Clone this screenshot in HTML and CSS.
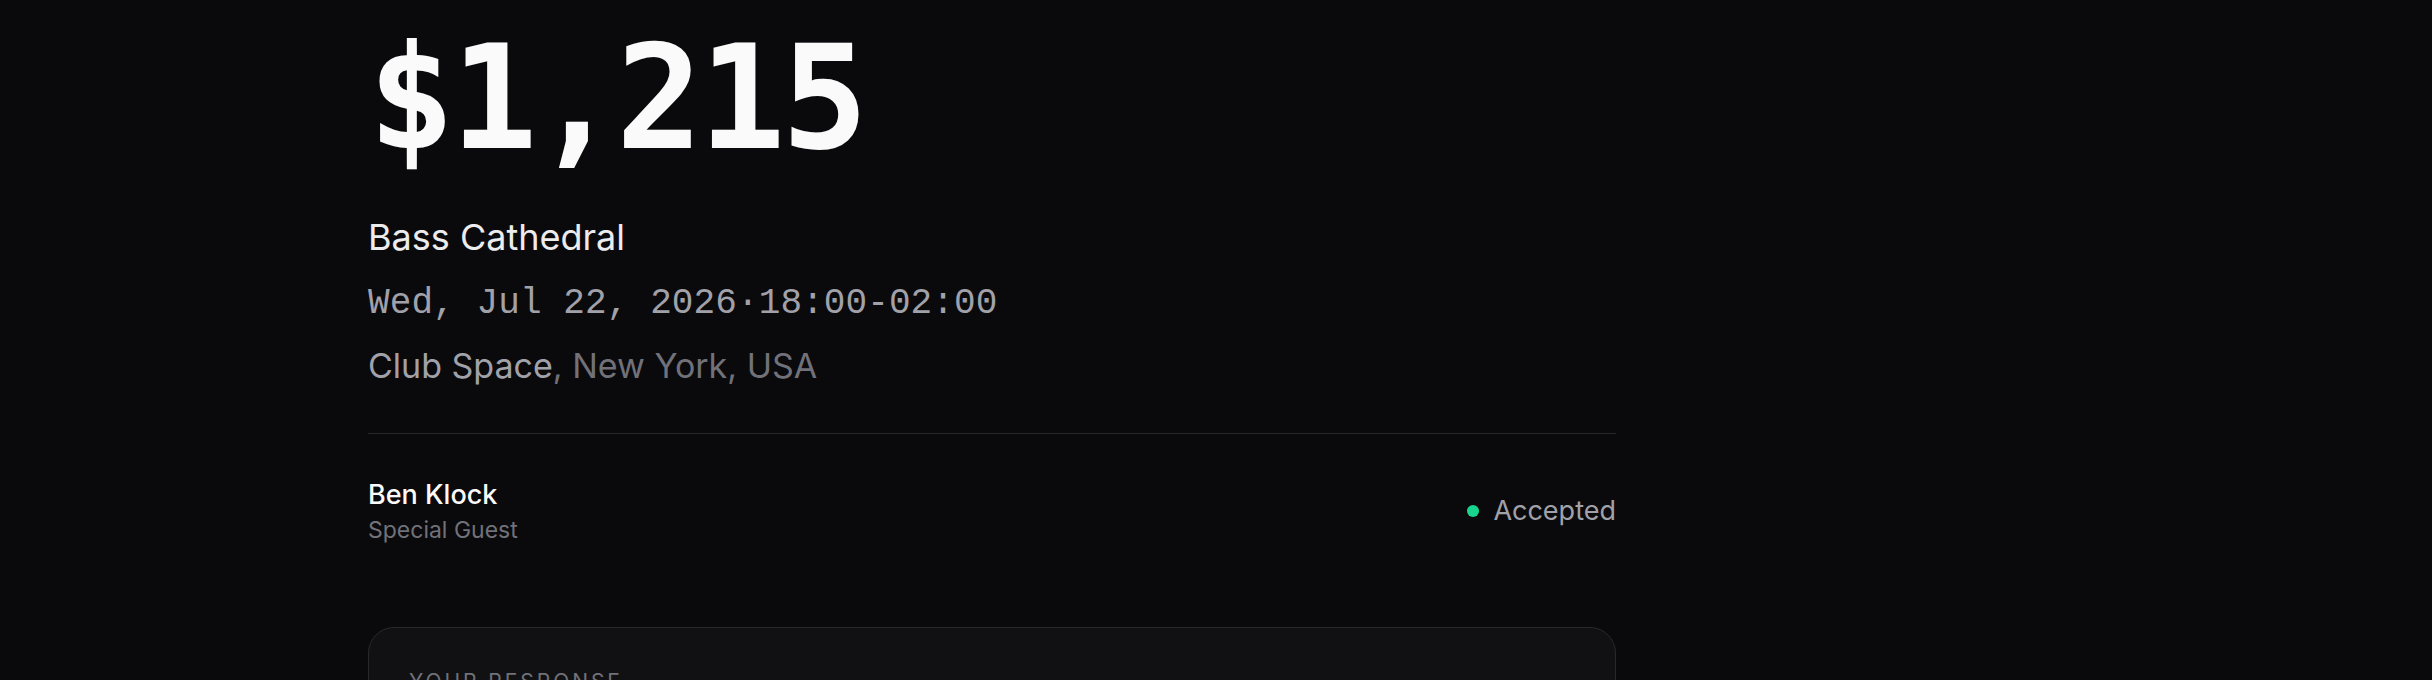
FILE: index.html
```html
<!DOCTYPE html>
<html lang="en">
<head>
<meta charset="utf-8">
<title>Booking offer</title>
<link rel="stylesheet" href="styles.css">
</head>
<body>
<main class="page">
  <section class="offer">
    <div class="amount">$1,215</div>
    <h1 class="event">Bass Cathedral</h1>
    <div class="when">Wed, Jul 22, 2026<span class="sep">·</span>18:00-02:00</div>
    <div class="where">Club Space<span class="city">, New York, USA</span></div>
  </section>
  <section class="artist-row">
    <div class="artist">
      <div class="artist-name">Ben Klock</div>
      <div class="artist-role">Special Guest</div>
    </div>
    <div class="status">
      <span class="status-dot"></span>
      <span class="status-text">Accepted</span>
    </div>
  </section>
  <section class="card">
    <div class="card-label">Your response</div>
    <p class="card-text">You accepted this offer. The promoter has been notified.</p>
  </section>
</main>
</body>
</html>
```
FILE: styles.css
```css
* { box-sizing: border-box; }
html, body {
  margin: 0;
  padding: 0;
  background: #0a0a0c;
  color: #fafafa;
  font-family: "Inter", "Liberation Sans", sans-serif;
}
.page {
  width: 1248px;
  margin-left: 368px;
  padding-top: 26px;
}
.offer {
  display: flex;
  flex-direction: column;
  border-bottom: 1px solid #27272a;
  padding-bottom: 46px;
}
.amount {
  font-family: "DejaVu Sans Mono", monospace;
  font-weight: 700;
  font-size: 144px;
  line-height: 144px;
  letter-spacing: -4px;
  color: #fafafa;
}
.event {
  margin: 45px 0 0;
  font-size: 36px;
  line-height: 44px;
  font-weight: 400;
  color: #ececee;
}
.when {
  margin-top: 18px;
  font-family: "Liberation Mono", monospace;
  font-size: 36px;
  line-height: 54px;
  letter-spacing: 0.1px;
  color: #a1a1aa;
}
.where {
  margin-top: 13px;
  font-size: 34px;
  line-height: 43px;
  color: #a1a1aa;
}
.city { color: #71717a; }
.artist-row {
  display: flex;
  justify-content: space-between;
  align-items: center;
  padding-top: 43px;
}
.artist { display: flex; flex-direction: column; gap: 4px; }
.artist-name {
  font-size: 27px;
  line-height: 35px;
  font-weight: 500;
  color: #fafafa;
}
.artist-role {
  font-size: 23px;
  line-height: 29px;
  color: #71717a;
}
.status {
  display: flex;
  align-items: center;
  gap: 14px;
}
.status-dot {
  width: 12px;
  height: 12px;
  border-radius: 50%;
  background: #18d48f;
}
.status-text {
  font-size: 27px;
  line-height: 36px;
  color: #a1a1aa;
}
.card {
  margin-top: 82px;
  border: 1px solid #29292d;
  border-radius: 26px;
  background: #111113;
  padding: 40px 40px;
}
.card-label {
  font-size: 21px;
  line-height: 28px;
  letter-spacing: 0.14em;
  text-transform: uppercase;
  color: #71717a;
}
.card-text {
  margin: 16px 0 0;
  font-size: 24px;
  color: #a1a1aa;
}
```
